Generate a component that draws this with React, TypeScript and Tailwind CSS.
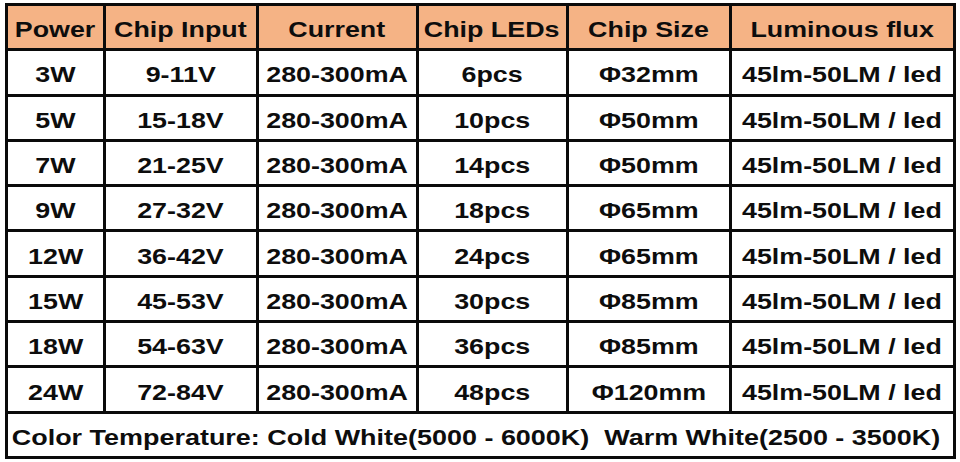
const headers = ["Power", "Chip Input", "Current", "Chip LEDs", "Chip Size", "Luminous flux"];

const rows = [
  ["3W", "9-11V", "280-300mA", "6pcs", "Φ32mm", "45lm-50LM / led"],
  ["5W", "15-18V", "280-300mA", "10pcs", "Φ50mm", "45lm-50LM / led"],
  ["7W", "21-25V", "280-300mA", "14pcs", "Φ50mm", "45lm-50LM / led"],
  ["9W", "27-32V", "280-300mA", "18pcs", "Φ65mm", "45lm-50LM / led"],
  ["12W", "36-42V", "280-300mA", "24pcs", "Φ65mm", "45lm-50LM / led"],
  ["15W", "45-53V", "280-300mA", "30pcs", "Φ85mm", "45lm-50LM / led"],
  ["18W", "54-63V", "280-300mA", "36pcs", "Φ85mm", "45lm-50LM / led"],
  ["24W", "72-84V", "280-300mA", "48pcs", "Φ120mm", "45lm-50LM / led"],
];

function Cell({ text, head }: { text: string; head?: boolean }) {
  return (
    <div
      className={`flex items-center justify-center overflow-visible ${
        head ? "bg-[#f5b385]" : "bg-white"
      }`}
    >
      <span className="inline-block translate-y-[3px] scale-x-[1.22] scale-y-[1.04] whitespace-pre">
        {text}
      </span>
    </div>
  );
}

export default function App() {
  return (
    <div
      className="w-[960px] h-[462px] bg-white pl-[5px] pt-[3px] text-[22px] font-bold leading-none text-[#0d0d0d]"
      style={{ fontFamily: '"Liberation Sans", Arial, sans-serif' }}
    >
      <div className="grid w-[951px] h-[456px] grid-cols-[94.5px_150px_157px_147px_160px_221.5px] grid-rows-[repeat(10,1fr)] gap-[3px] p-[3px] bg-[#0a0a0a]">
        {headers.map((h) => (
          <Cell key={h} text={h} head />
        ))}
        {rows.map((r, i) => r.map((c, j) => <Cell key={`${i}-${j}`} text={c} />))}
        <div className="col-span-6 flex items-center justify-center bg-white pr-[10px]">
          <span className="inline-block translate-y-[3px] scale-x-[1.225] scale-y-[1.04] whitespace-pre">
            {"Color Temperature: Cold White(5000 - 6000K)  Warm White(2500 - 3500K)"}
          </span>
        </div>
      </div>
    </div>
  );
}
